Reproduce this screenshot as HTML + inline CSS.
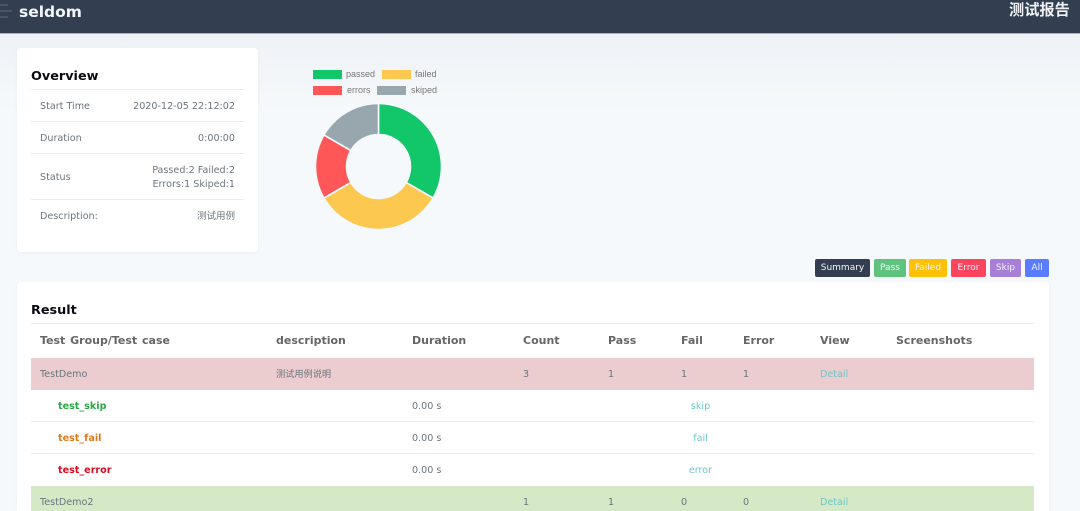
<!DOCTYPE html>
<html><head><meta charset="utf-8">
<style>
html,body{margin:0;padding:0;overflow:hidden;height:511px}
body{width:1080px;height:511px;position:relative;background:linear-gradient(#eef2f6 34px,#f5f9fc 110px);font-family:"DejaVu Sans","Noto Sans CJK SC",sans-serif;font-size:9.6px;color:#6c757d}
div{position:absolute;white-space:nowrap}
.t{line-height:14px}
.r{text-align:right;right:845px}
.card{background:#fff;border-radius:4px;box-shadow:0 1px 3px rgba(40,60,90,.05)}
.hl{background:#e9ecef;height:1px}
.b{top:259px;height:18px;line-height:19px;text-align:center;color:#f4f4f6;border-radius:2px;font-size:9px}
.h{font-weight:bold;font-size:11px;color:#666;top:334px}
.row{left:31px;width:1003px}
.a{color:#6ec6ca}
.c{transform:translateX(-50%)}
.lg{font-family:"Liberation Sans",sans-serif;font-size:9px;color:#777}
</style></head><body>
<div style="left:0;top:0;width:1080px;height:33px;background:#333f50;border-bottom:1px solid #a9afba"></div>
<div style="left:0;top:4px;width:8px;height:2px;background:#4a5566"></div>
<div style="left:0;top:10px;width:12px;height:2px;background:#4a5566"></div>
<div style="left:0;top:16px;width:8px;height:2px;background:#4a5566"></div>
<div class="t" style="left:19px;top:2px;font-size:15.5px;line-height:20px;font-weight:bold;color:#f2f6fa">seldom</div>
<div class="t" style="left:1009px;top:0;font-size:15.2px;line-height:20px;font-weight:bold;color:#eef1f5">测试报告</div>

<div class="card" style="left:17px;top:48px;width:241px;height:204px"></div>
<div class="t" style="left:31px;top:69px;font-size:12.8px;line-height:16px;font-weight:bold;color:#0b0b14">Overview</div>
<div class="hl" style="left:31px;top:89px;width:213px"></div>
<div class="t" style="left:40px;top:100px">Start Time</div>
<div class="t r" style="top:100px">2020-12-05 22:12:02</div>
<div class="hl" style="left:31px;top:121px;width:213px"></div>
<div class="t" style="left:40px;top:132px">Duration</div>
<div class="t r" style="top:132px">0:00:00</div>
<div class="hl" style="left:31px;top:153px;width:213px"></div>
<div class="t" style="left:40px;top:171px">Status</div>
<div class="t r" style="top:164px">Passed:2 Failed:2</div>
<div class="t r" style="top:178px">Errors:1 Skiped:1</div>
<div class="hl" style="left:31px;top:199px;width:213px"></div>
<div class="t" style="left:40px;top:210px">Description:</div>
<div class="t r" style="top:210px;font-size:9.5px">测试用例</div>

<div style="left:313px;top:70px;width:29px;height:9px;background:#12c66a"></div>
<div class="t lg" style="left:346px;top:67px">passed</div>
<div style="left:382px;top:70px;width:29px;height:9px;background:#fcc850"></div>
<div class="t lg" style="left:415px;top:67px">failed</div>
<div style="left:313px;top:86px;width:29px;height:9px;background:#ff5757"></div>
<div class="t lg" style="left:347px;top:83px">errors</div>
<div style="left:377px;top:86px;width:29px;height:9px;background:#98a6ad"></div>
<div class="t lg" style="left:411px;top:83px">skiped</div>

<svg style="position:absolute;left:310px;top:98px" width="137" height="137" viewBox="-68.5 -68.5 137 137">
<g stroke="#f5f9fc" stroke-width="1.6" stroke-linejoin="miter">
<path fill="#12c66a" d="M0-63A63 63 0 0 1 54.56 31.5L27.71 16A32 32 0 0 0 0-32Z"/>
<path fill="#fcc850" d="M54.56 31.5A63 63 0 0 1-54.56 31.5L-27.71 16A32 32 0 0 0 27.71 16Z"/>
<path fill="#ff5757" d="M-54.56 31.5A63 63 0 0 1-54.56-31.5L-27.71-16A32 32 0 0 0-27.71 16Z"/>
<path fill="#98a6ad" d="M-54.56-31.5A63 63 0 0 1 0-63L0-32A32 32 0 0 0-27.71-16Z"/>
</g></svg>

<div class="b" style="left:815px;width:55px;background:#333f50">Summary</div>
<div class="b" style="left:874px;width:32px;background:#5fc27e">Pass</div>
<div class="b" style="left:909px;width:38px;background:#ffc107">Failed</div>
<div class="b" style="left:951px;width:35px;background:#fa4460">Error</div>
<div class="b" style="left:990px;width:31px;background:#a77fd8">Skip</div>
<div class="b" style="left:1025px;width:24px;background:#5a7dff">All</div>

<div class="card" style="left:17px;top:282px;width:1032px;height:229px;border-radius:4px 4px 0 0"></div>
<div class="t" style="left:31px;top:303px;font-size:12.8px;line-height:16px;font-weight:bold;color:#0b0b14">Result</div>
<div class="hl" style="left:31px;top:323px;width:1003px"></div>
<div class="t h" style="left:40px;word-spacing:1px">Test Group/Test case</div>
<div class="t h" style="left:276px">description</div>
<div class="t h" style="left:412px">Duration</div>
<div class="t h" style="left:523px">Count</div>
<div class="t h" style="left:608px">Pass</div>
<div class="t h" style="left:681px">Fail</div>
<div class="t h" style="left:743px">Error</div>
<div class="t h" style="left:820px">View</div>
<div class="t h" style="left:896px">Screenshots</div>

<div class="row" style="top:358px;height:32px;background:#ebcccf"></div>
<div class="t" style="left:40px;top:368px">TestDemo</div>
<div class="t" style="left:276px;top:368px;font-size:9.2px">测试用例说明</div>
<div class="t" style="left:523px;top:368px">3</div>
<div class="t" style="left:608px;top:368px">1</div>
<div class="t" style="left:681px;top:368px">1</div>
<div class="t" style="left:743px;top:368px">1</div>
<div class="t a" style="left:820px;top:368px">Detail</div>

<div class="t" style="left:58px;top:400px;font-weight:bold;color:#28a745">test_skip</div>
<div class="t" style="left:412px;top:400px">0.00 s</div>
<div class="t a c" style="left:700.5px;top:400px">skip</div>
<div class="hl" style="left:31px;top:421px;width:1003px"></div>
<div class="t" style="left:58px;top:432px;font-weight:bold;color:#dc7a1c">test_fail</div>
<div class="t" style="left:412px;top:432px">0.00 s</div>
<div class="t a c" style="left:700.5px;top:432px">fail</div>
<div class="hl" style="left:31px;top:453px;width:1003px"></div>
<div class="t" style="left:58px;top:464px;font-weight:bold;color:#dc0a1e">test_error</div>
<div class="t" style="left:412px;top:464px">0.00 s</div>
<div class="t a c" style="left:700.5px;top:464px">error</div>

<div class="row" style="top:486px;height:25px;background:#d6e9c6"></div>
<div class="t" style="left:40px;top:496px">TestDemo2</div>
<div class="t" style="left:523px;top:496px">1</div>
<div class="t" style="left:608px;top:496px">1</div>
<div class="t" style="left:681px;top:496px">0</div>
<div class="t" style="left:743px;top:496px">0</div>
<div class="t a" style="left:820px;top:496px">Detail</div>
</body></html>
